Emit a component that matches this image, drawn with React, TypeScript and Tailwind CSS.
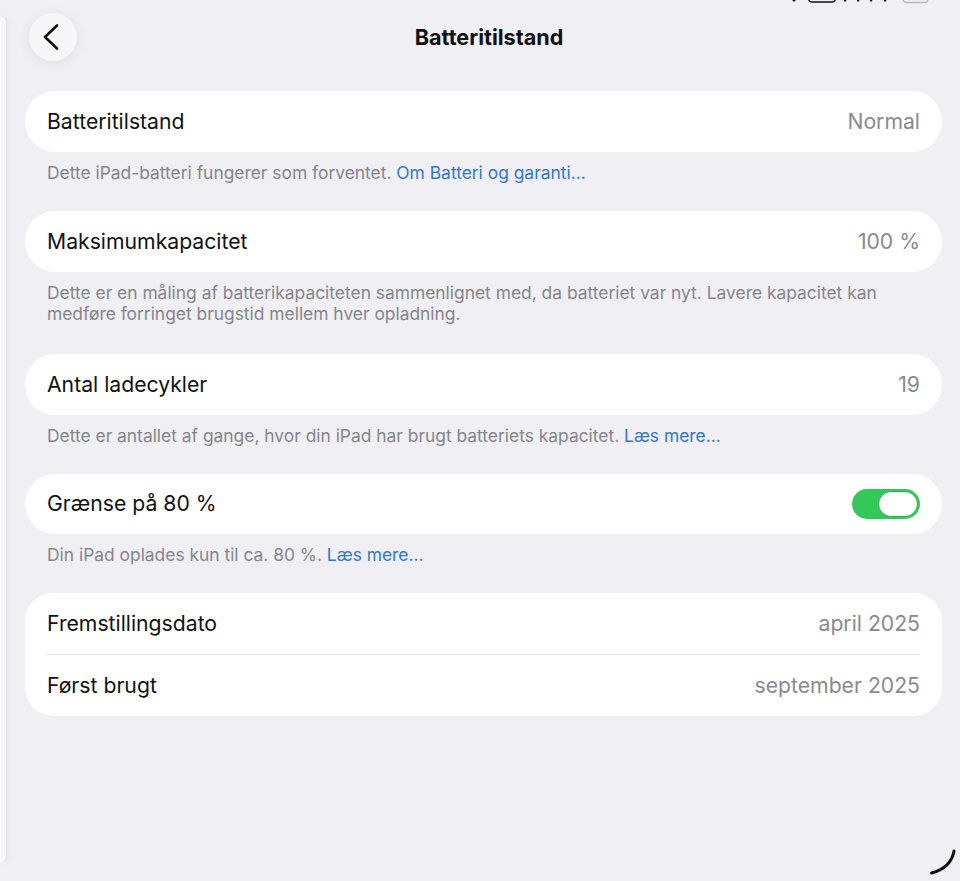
import React from "react";

function Row({ label, value, h = "h-[61px]", children }: { label: string; value?: string; h?: string; children?: React.ReactNode }) {
  return (
    <div className={`flex ${h} items-center justify-between px-[22px]`}>
      <span className="text-[21.2px] text-[#111111]">{label}</span>
      {value !== undefined ? <span className="text-[21.2px] text-[#8a8a8e]">{value}</span> : children}
    </div>
  );
}

function Footer({ children, mb = "mb-[28px]" }: { children: React.ReactNode; mb?: string }) {
  return <p className={`${mb} mt-[10px] px-[22px] text-[17.4px] leading-[21px] text-[#86868b]`}>{children}</p>;
}

function Link({ children }: { children: React.ReactNode }) {
  return <span className="text-[#3278c8]">{children}</span>;
}

export default function App() {
  return (
    <div
      className="relative flex h-[881px] w-[960px] overflow-hidden bg-[#efeff4]"
      style={{ fontFamily: "Inter, 'Noto Sans', sans-serif" }}
    >
      {/* sidebar edge */}
      <div className="mb-[18px] mt-[16px] w-[7px] shrink-0 rounded-r-[14px] border-r border-[#e2e2e7] bg-[#f8f8fa] shadow-[1px_0_6px_rgba(0,0,0,0.05)]" />

      <div className="ml-[18px] mr-[18px] flex flex-1 flex-col">
        {/* header */}
        <div className="flex h-[91px] items-start">
          <button className="ml-[4px] mt-[13px] flex h-[48px] w-[48px] items-center justify-center rounded-full bg-[#f7f7f9] shadow-[0_2px_14px_rgba(0,0,0,0.07)]">
            <svg width="48" height="48" viewBox="0 0 48 48" fill="none">
              <path d="M28 12.5 L16 24 L28 35.5" stroke="#111" strokeWidth="2.6" strokeLinecap="round" strokeLinejoin="round" />
            </svg>
          </button>
          <h1 className="mr-[52px] mt-[24px] flex-1 pl-[11px] text-center text-[21.6px] font-bold leading-[26px] text-[#111]">
            Batteritilstand
          </h1>
        </div>

        <div className="rounded-[30px] bg-white">
          <Row label="Batteritilstand" value="Normal" />
        </div>
        <Footer>
          Dette iPad-batteri fungerer som forventet. <Link>Om Batteri og garanti…</Link>
        </Footer>

        <div className="rounded-[30px] bg-white">
          <Row label="Maksimumkapacitet" value="100 %" />
        </div>
        <Footer mb="mb-[30px]">
          Dette er en måling af batterikapaciteten sammenlignet med, da batteriet var nyt. Lavere kapacitet kan
          <br />
          medføre forringet brugstid mellem hver opladning.
        </Footer>

        <div className="rounded-[30px] bg-white">
          <Row label="Antal ladecykler" value="19" />
        </div>
        <Footer>
          Dette er antallet af gange, hvor din iPad har brugt batteriets kapacitet. <Link>Læs mere…</Link>
        </Footer>

        <div className="rounded-[30px] bg-white">
          <Row label="Grænse på 80 %" h="h-[60px]">
            <div className="relative h-[30px] w-[68px] rounded-full bg-[#34c759]">
              <div className="absolute right-[2px] top-[2px] h-[26px] w-[40px] rounded-full border border-[#2fae4f] bg-white" />
            </div>
          </Row>
        </div>
        <Footer>
          Din iPad oplades kun til ca. 80 %. <Link>Læs mere…</Link>
        </Footer>

        <div className="rounded-[28px] bg-white">
          <Row label="Fremstillingsdato" value="april 2025" />
          <div className="mx-[22px] h-px bg-[#e3e3e6]" />
          <Row label="Først brugt" value="september 2025" />
        </div>
      </div>

      {/* status bar remnants */}
      <svg className="absolute left-0 top-0" width="960" height="6" viewBox="0 0 960 6" fill="none">
        <circle cx="794" cy="0" r="1.6" fill="#111" />
        <rect x="808.5" y="-10" width="27" height="12" rx="3.5" stroke="#111" strokeWidth="1.4" />
        <rect x="844" y="-6" width="2.2" height="7.5" fill="#111" />
        <rect x="857" y="-6" width="2.2" height="7.5" fill="#111" />
        <rect x="870" y="-6" width="2.2" height="7.5" fill="#111" />
        <rect x="884" y="-6" width="2.2" height="7.5" fill="#111" />
        <rect x="903" y="-10" width="25" height="12.5" rx="3.5" stroke="#b9b9bd" strokeWidth="1.4" />
      </svg>

      {/* screen corner arc */}
      <svg className="absolute left-[920px] top-[840px]" width="40" height="41" viewBox="0 0 40 41" fill="none">
        <path d="M34 11 Q31 28 11.5 33" stroke="#111" strokeWidth="3" strokeLinecap="round" />
      </svg>
    </div>
  );
}
